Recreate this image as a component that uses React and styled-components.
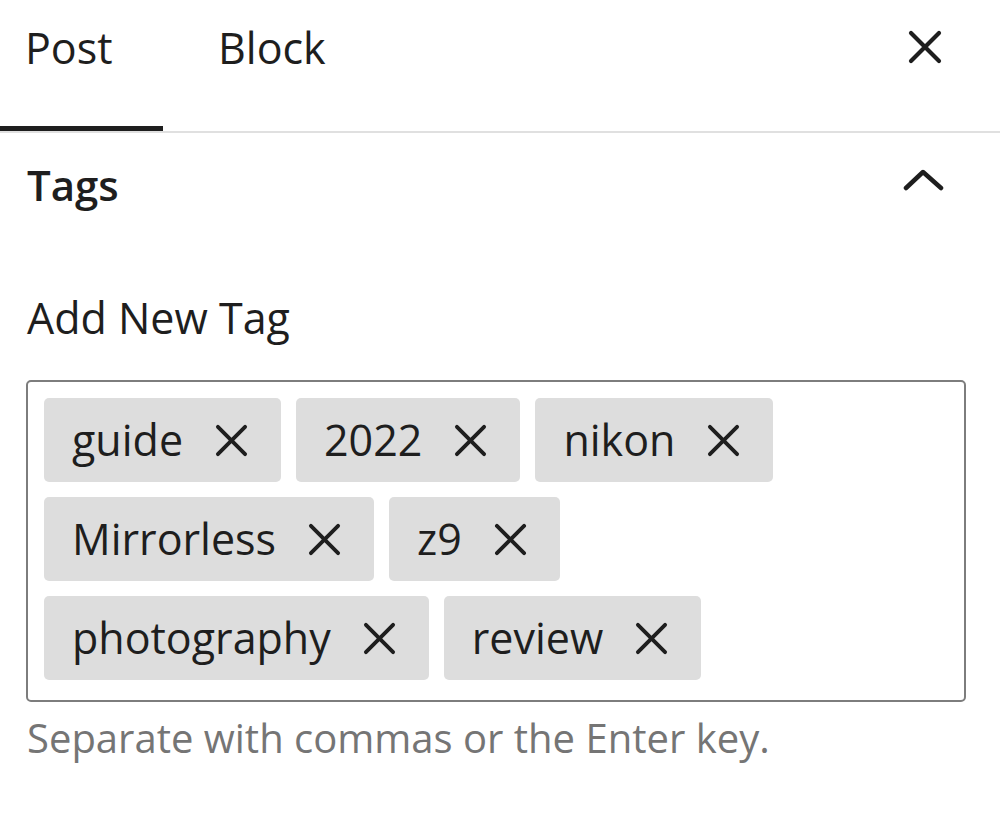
import React from "react";
import styled, { createGlobalStyle } from "styled-components";

const Global = createGlobalStyle`
  html, body {
    margin: 0;
    padding: 0;
    background: #ffffff;
  }
  body {
    font-family: "Open Sans", "Noto Sans", "Liberation Sans", sans-serif;
    color: #1e1e1e;
  }
  * { box-sizing: border-box; }
`;

const Sidebar = styled.div`
  width: 1000px;
  height: 822px;
  background: #fff;
  overflow: hidden;
`;

const TabBar = styled.div`
  display: flex;
  align-items: flex-start;
  height: 133px;
  border-bottom: 2px solid #e0e0e0;
`;

const Tab = styled.button`
  all: unset;
  display: block;
  box-sizing: border-box;
  height: 131px;
  width: ${(p) => p.$width}px;
  padding: 22px 0 57px ${(p) => p.$pad}px;
  font-family: "Open Sans", "Noto Sans", sans-serif;
  font-size: 43px;
  line-height: 52px;
  color: #1e1e1e;
  box-shadow: ${(p) => (p.$active ? "inset 0 -5px 0 #1e1e1e" : "none")};
  cursor: pointer;
`;

const CloseButton = styled.button`
  all: unset;
  display: flex;
  margin-left: auto;
  margin-right: 58px;
  margin-top: 30px;
  width: 34px;
  height: 34px;
  cursor: pointer;
`;

const Panel = styled.section`
  padding: 26px 55px 0 27px;
`;

const PanelHeader = styled.div`
  display: flex;
  align-items: flex-start;
  justify-content: space-between;
`;

const PanelTitle = styled.h2`
  margin: 0;
  font-size: 42px;
  line-height: 52px;
  font-weight: 600;
  color: #1e1e1e;
`;

const Toggle = styled.button`
  all: unset;
  display: flex;
  width: 42px;
  height: 32px;
  margin-top: 8px;
  cursor: pointer;
`;

const Label = styled.label`
  display: block;
  margin-top: 81px;
  font-size: 43px;
  line-height: 52px;
  color: #1e1e1e;
`;

const TokenField = styled.div`
  margin-top: 36px;
  margin-left: -1px;
  width: 940px;
  border: 2px solid #7d7d7d;
  border-radius: 5px;
  padding: 16px 16px 20px 16px;
  display: flex;
  flex-wrap: wrap;
  column-gap: 15px;
  row-gap: 15px;
`;

const Token = styled.span`
  display: inline-flex;
  align-items: center;
  height: 84px;
  padding: 0 33px 0 28px;
  gap: 32px;
  background: #dddddd;
  border-radius: 5px;
  font-size: 43px;
  line-height: 52px;
  color: #1e1e1e;
`;

const TokenText = styled.span`
  white-space: nowrap;
`;

const RemoveButton = styled.span`
  display: flex;
  width: 33px;
  height: 33px;
  cursor: pointer;
`;

const Help = styled.p`
  margin: 12px 0 0 0;
  font-size: 40px;
  line-height: 48px;
  color: #757575;
`;

const Cross = ({ size, stroke }) => (
  <svg width={size} height={size} viewBox="0 0 34 34" fill="none">
    <path
      d="M3 3 L31 31 M31 3 L3 31"
      stroke="#1e1e1e"
      strokeWidth={stroke}
      strokeLinecap="round"
    />
  </svg>
);

const ChevronUp = () => (
  <svg width="42" height="32" viewBox="0 0 42 32" fill="none">
    <path
      d="M3 21 L20 5 L38 21"
      stroke="#1e1e1e"
      strokeWidth="4.5"
      strokeLinecap="round"
      strokeLinejoin="round"
    />
  </svg>
);

const tags = ["guide", "2022", "nikon", "Mirrorless", "z9", "photography", "review"];

export default function App() {
  return (
    <>
      <Global />
      <Sidebar>
        <TabBar>
          <Tab $active $width={163} $pad={25}>Post</Tab>
          <Tab $width={200} $pad={55}>Block</Tab>
          <CloseButton aria-label="Close settings">
            <Cross size={34} stroke={4.2} />
          </CloseButton>
        </TabBar>
        <Panel>
          <PanelHeader>
            <PanelTitle>Tags</PanelTitle>
            <Toggle aria-label="Collapse">
              <ChevronUp />
            </Toggle>
          </PanelHeader>
          <Label>Add New Tag</Label>
          <TokenField>
            {tags.map((t) => (
              <Token key={t}>
                <TokenText>{t}</TokenText>
                <RemoveButton>
                  <Cross size={33} stroke={4} />
                </RemoveButton>
              </Token>
            ))}
          </TokenField>
          <Help>Separate with commas or the Enter key.</Help>
        </Panel>
      </Sidebar>
    </>
  );
}
